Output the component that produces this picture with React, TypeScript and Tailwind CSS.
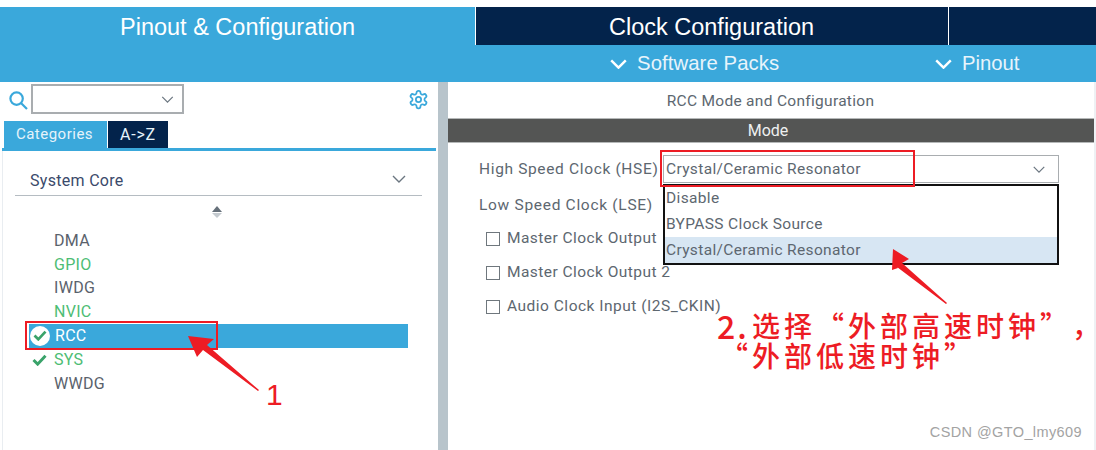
import React from "react";

const Chevron = ({ className, stroke = "#6b7680", sw = 1.4 }: { className: string; stroke?: string; sw?: number }) => (
  <svg className={className} viewBox="0 0 14 8" fill="none" stroke={stroke} strokeWidth={sw}>
    <path d="M1 1l6 6 6-6" />
  </svg>
);

const Check = ({ className, stroke }: { className: string; stroke: string }) => (
  <svg className={className} viewBox="0 0 16 13" fill="none" stroke={stroke} strokeWidth="3.2">
    <path d="M1.5 6.5l4.5 4.5 8.5-9" />
  </svg>
);

const Option = ({ label, active }: { label: string; active?: boolean }) => (
  <div className={`h-[26px] pl-[1px] flex items-center text-[15.5px] tracking-[0.35px] text-[#5d6770] ${active ? "bg-[#d7e6f3]" : ""}`}>{label}</div>
);

const CheckRow = ({ label, track }: { label: string; track: string }) => (
  <div className="h-[34px] flex items-center pl-[7px] gap-[7px]">
    <span className="w-[14px] h-[14px] border border-[#6f777d] bg-white" />
    <span className={`text-[15.5px] text-[#5d6770] ${track}`}>{label}</span>
  </div>
);

const Item = ({ label, color }: { label: string; color: string }) => (
  <div className={`h-[23.7px] pl-[54px] flex items-center text-[16px] tracking-[0.3px] ${color}`}>{label}</div>
);

export default function App() {
  return (
    <div className="relative w-[1096px] h-[450px] overflow-hidden bg-white pt-[7px] font-['Roboto','Liberation_Sans',sans-serif]">
      {/* top bars */}
      <header className="h-[75px] bg-[#3aa8db] flex flex-col font-['Liberation_Sans',sans-serif]">
        <div className="h-[38px] flex">
          <div className="w-[475px] flex items-start pt-[5px] pl-[120px] text-white text-[23.5px] leading-[30px]">Pinout &amp; Configuration</div>
          <div className="w-[473px] bg-[#03234b] border-l border-white flex justify-center pt-[5px] pr-[1px] text-white text-[23.5px] leading-[30px]">Clock Configuration</div>
          <div className="flex-1 bg-[#03234b] border-l border-white" />
        </div>
        <div className="flex-1 flex items-center text-[#e8f4fb] text-[20.3px]">
          <div className="w-[610px] shrink-0" />
          <Chevron className="w-[17px] h-[10px] mr-[10px]" stroke="#ffffff" sw={2} />
          <span className="w-[298px] shrink-0 tracking-[0.1px]">Software Packs</span>
          <Chevron className="w-[17px] h-[10px] mr-[10px]" stroke="#ffffff" sw={2} />
          <span>Pinout</span>
        </div>
      </header>

      <main className="h-[368px] flex">
        {/* left */}
        <section className="w-[438px] shrink-0 flex flex-col">
          <div className="h-[39px] flex items-center pl-[9px] pr-[9px]">
            <svg className="w-[19px] h-[19px] mt-[-3px]" viewBox="0 0 19 19" fill="none" stroke="#3aa8db" strokeWidth="2.2">
              <circle cx="7.6" cy="7.6" r="6.2" />
              <path d="M12 12l6 6" />
            </svg>
            <div className="ml-[3px] w-[153px] h-[30px] mt-[-5px] border-2 border-[#a9adb0] flex items-center justify-end pr-[8px]">
              <Chevron className="w-[13px] h-[7px]" />
            </div>
            <svg className="ml-auto w-[21px] h-[21px] mt-[-5px]" viewBox="0 0 24 24" fill="none" stroke="#3aa8db" strokeWidth="2">
              <circle cx="12" cy="12" r="3" />
              <path d="M12.22 2h-.44a2 2 0 0 0-2 2v.18a2 2 0 0 1-1 1.73l-.43.25a2 2 0 0 1-2 0l-.15-.08a2 2 0 0 0-2.73.73l-.22.38a2 2 0 0 0 .73 2.73l.15.1a2 2 0 0 1 1 1.72v.51a2 2 0 0 1-1 1.74l-.15.09a2 2 0 0 0-.73 2.73l.22.38a2 2 0 0 0 2.73.73l.15-.08a2 2 0 0 1 2 0l.43.25a2 2 0 0 1 1 1.73V20a2 2 0 0 0 2 2h.44a2 2 0 0 0 2-2v-.18a2 2 0 0 1 1-1.73l.43-.25a2 2 0 0 1 2 0l.15.08a2 2 0 0 0 2.73-.73l.22-.39a2 2 0 0 0-.73-2.73l-.15-.08a2 2 0 0 1-1-1.74v-.5a2 2 0 0 1 1-1.74l.15-.09a2 2 0 0 0 .73-2.73l-.22-.38a2 2 0 0 0-2.73-.73l-.15.08a2 2 0 0 1-2 0l-.43-.25a2 2 0 0 1-1-1.73V4a2 2 0 0 0-2-2z" />
            </svg>
          </div>
          <div className="h-[27px] flex pl-[4px] items-stretch">
            <div className="w-[103px] bg-[#3aa8db] text-[#e6f3fa] text-[15px] tracking-[0.5px] flex items-center justify-center pr-[2px]">Categories</div>
            <div className="ml-[1px] w-[60px] bg-[#03234b] text-[#e6f3fa] text-[16px] tracking-[0.8px] flex items-center justify-center">A-&gt;Z</div>
          </div>
          <div className="flex-1 flex flex-col">
            <div className="h-[3px] mx-[2px] bg-[#3aa8db]" />
            <div className="flex-1 ml-[2px] border-l border-[#e9edf1] pt-[13px]">
              <div className="mx-[12px] h-[32px] w-[407px] border-b border-[#b5bcc2] flex items-center justify-between pl-[15px] pr-[16px] pt-[3px] text-[16px] tracking-[0.3px] text-[#3b4a6b]">
                <span>System Core</span>
                <Chevron className="w-[14px] h-[8px] mb-[4px]" />
              </div>
              <div className="h-[31px] flex flex-col items-center justify-center gap-[1px] pl-[1px] pr-[4px] w-[430px]">
                <span className="w-0 h-0 border-x-[5px] border-x-transparent border-b-[6px] border-b-[#66707a]" />
                <span className="w-0 h-0 border-x-[5px] border-x-transparent border-t-[5px] border-t-[#c4cacf]" />
              </div>
              <div className="-ml-[3px] mt-[2px]">
                <Item label="DMA" color="text-[#5a626c]" />
                <Item label="GPIO" color="text-[#4dbd74]" />
                <Item label="IWDG" color="text-[#5a626c]" />
                <Item label="NVIC" color="text-[#4dbd74]" />
                <div className="ml-[29px] w-[379px] h-[24px] bg-[#3aa8db] flex items-center text-white text-[16px] tracking-[0.3px]">
                  <span className="ml-[1px] w-[20px] h-[20px] rounded-full bg-white flex items-center justify-center">
                    <Check className="w-[14px] h-[11px]" stroke="#3aa36a" />
                  </span>
                  <span className="ml-[5px]">RCC</span>
                </div>
                <div className="relative">
                  <Check className="absolute left-[32px] top-[6px] w-[15px] h-[12px]" stroke="#3aa36a" />
                  <Item label="SYS" color="text-[#4dbd74]" />
                </div>
                <div className="pt-[1px]">
                  <Item label="WWDG" color="text-[#5a626c]" />
                </div>
              </div>
            </div>
          </div>
        </section>

        {/* divider */}
        <div className="w-[10px] shrink-0 bg-[#b8c4cb]" />

        {/* right */}
        <section className="flex-1 flex flex-col border-r-2 border-[#eef1f4]">
          <div className="h-[36px] pt-[4px] flex items-center justify-center text-[15.5px] tracking-[0.3px] text-[#5d6770] pr-[1px]">RCC Mode and Configuration</div>
          <div className="h-[25px] bg-[#545554] border-y border-[#b5b8b8] flex items-center justify-center pr-[6px] text-[16px] text-[#eef0f0]">Mode</div>
          <div className="pt-[12px] pl-[31px] relative flex-1">
            <div className="flex items-center h-[28px]">
              <span className="w-[184px] shrink-0 pt-[1px] text-[15.5px] tracking-[0.65px] text-[#5d6770] whitespace-nowrap">High Speed Clock (HSE)</span>
              <div className="w-[396px] h-[28px] border border-[#a9adb0] pl-[2px] pr-[12px] pt-[1px] flex items-center justify-between text-[15.5px] tracking-[0.35px] text-[#5d6770]">
                <span>Crystal/Ceramic Resonator</span>
                <Chevron className="w-[14px] h-[7px]" />
              </div>
            </div>
            <div className="h-[39px] pt-[6px] flex items-center text-[15.5px] tracking-[0.7px] text-[#5d6770]">Low Speed Clock (LSE)</div>
            <CheckRow label="Master Clock Output" track="tracking-[0.45px]" />
            <CheckRow label="Master Clock Output 2" track="tracking-[0.45px]" />
            <CheckRow label="Audio Clock Input (I2S_CKIN)" track="tracking-[0.5px]" />

            <div className="absolute left-[215px] top-[41px] w-[396px] h-[81px] border-2 border-[#111] bg-white flex flex-col">
              <Option label="Disable" />
              <Option label="BYPASS Clock Source" />
              <Option label="Crystal/Ceramic Resonator" active />
            </div>
          </div>
        </section>
      </main>

      {/* annotations */}
      <div className="absolute left-[25px] top-[321px] w-[193px] h-[29px] border-2 border-[#ed1c24]" />
      <div className="absolute left-[660px] top-[150px] w-[255px] h-[37px] border-2 border-[#ed1c24]" />
      <svg className="absolute left-0 top-0 w-[1096px] h-[450px] pointer-events-none" viewBox="0 0 1096 450" fill="#ed1c24">
        <path d="M188 336L214 339L207 345L259 390L258 391L203 350L197 357Z" />
        <path d="M893 249L909 259L902 263L947 303L946 304L897 267L898 268L892 270Z" />
      </svg>
      <div className="absolute left-[266px] top-[378px] text-[#ed1c24] text-[30px] leading-[34px] font-['Liberation_Sans',sans-serif]">1</div>
      <div className="absolute left-[717px] top-[310px] text-[#ed1c24] text-[28px] leading-[30px] tracking-[4px] font-medium font-['Noto_Sans_CJK_SC',sans-serif] whitespace-nowrap">
        <div className="flex">
          <span className="w-[35px] text-[32px] tracking-[2px]">2.</span>
          <span>选择“外部高速时钟”</span>
          <span className="tracking-[0px] [font-feature-settings:'halt']">，</span>
        </div>
        <div className="pl-[3px]">“外部低速时钟”</div>
      </div>
      <div className="absolute right-[14px] top-[423px] text-[#a3a3a3] text-[14.5px] leading-[18px] tracking-[0.4px] font-['Liberation_Sans',sans-serif]">CSDN @GTO_lmy609</div>
    </div>
  );
}
